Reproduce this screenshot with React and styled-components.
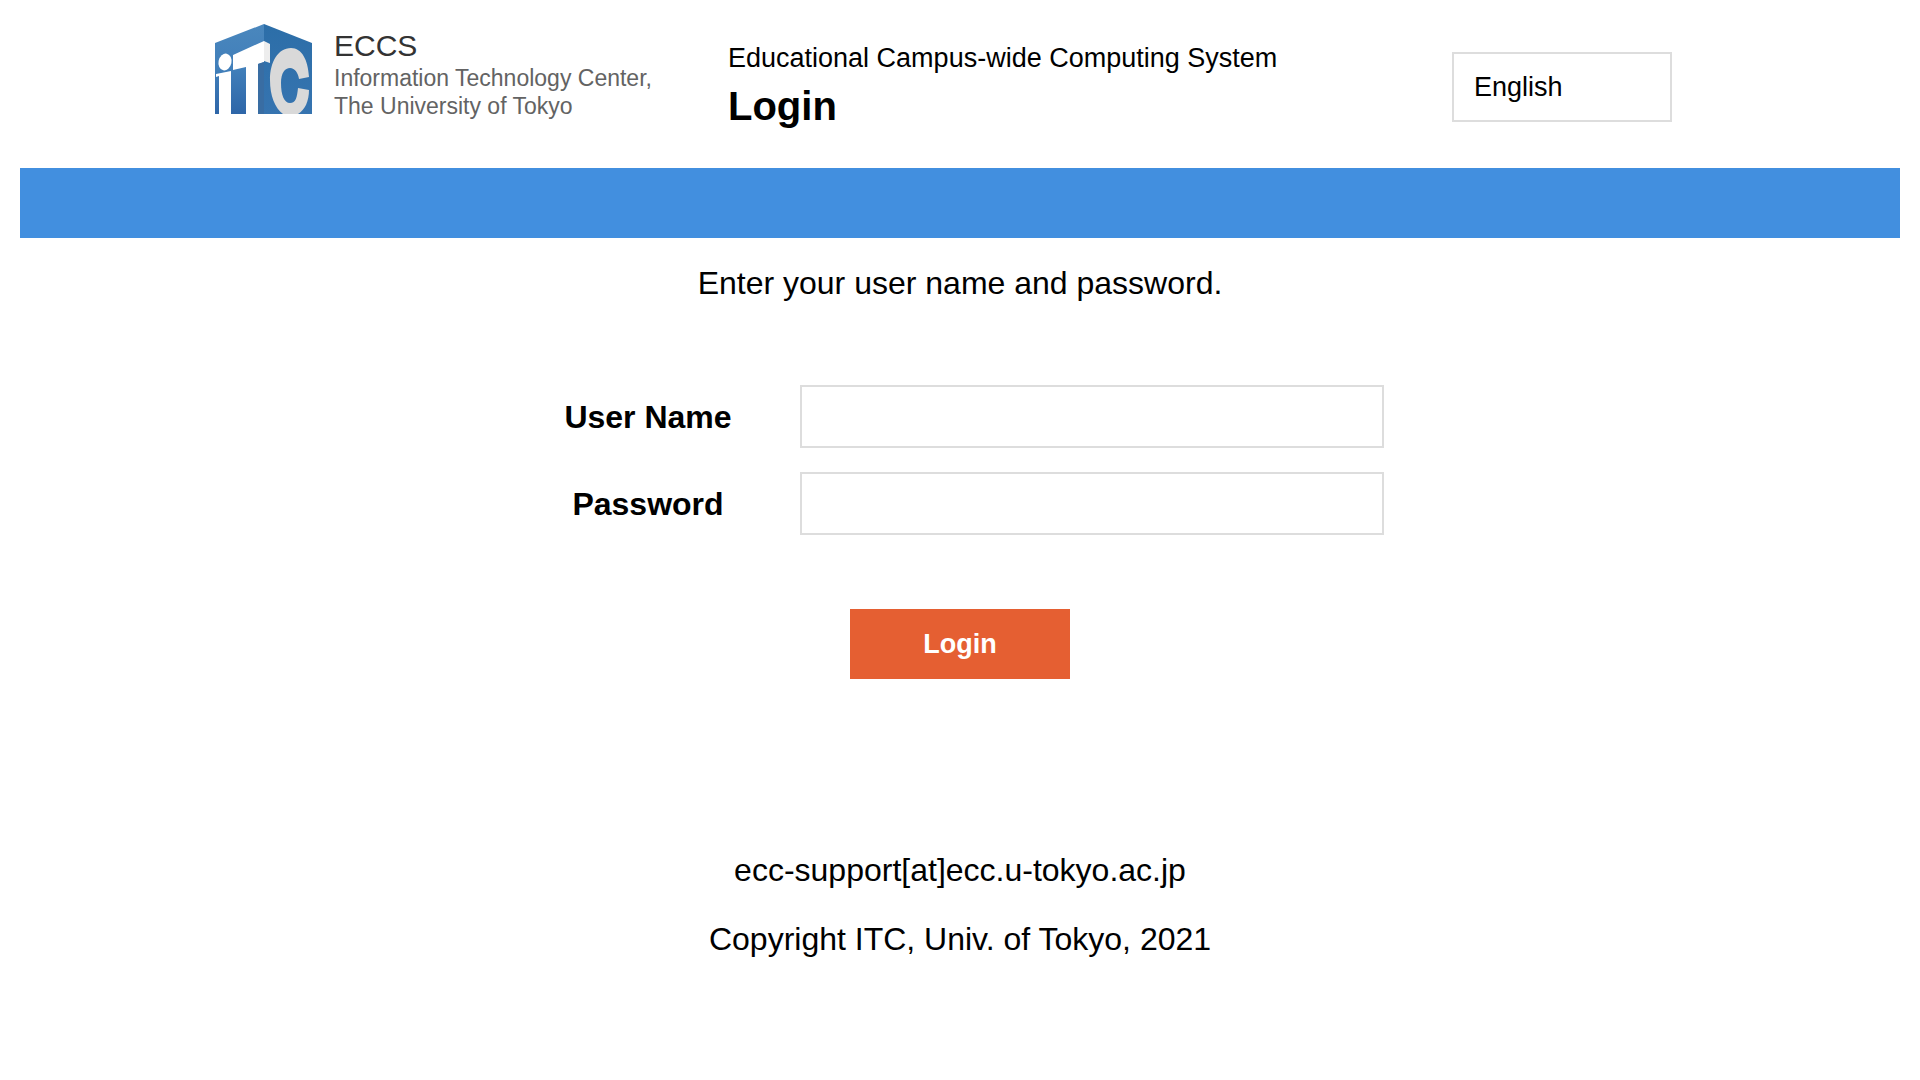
import React from "react";
import styled, { createGlobalStyle } from "styled-components";

const GlobalStyle = createGlobalStyle`
  * { box-sizing: border-box; }
  body {
    margin: 0;
    background: #fff;
    color: #000;
    font-family: "Liberation Sans", Arial, Helvetica, sans-serif;
    font-size: 32px;
    line-height: 40px;
  }
`;

const Page = styled.div`
  padding: 0 20px;
`;

const Header = styled.header`
  display: grid;
  grid-template-columns: 460px 1fr 220px;
  column-gap: 56px;
  align-items: start;
  max-width: 1496px;
  height: 168px;
  margin: 0 auto;
  padding-right: 36px;
`;

const Brand = styled.div`
  display: flex;
  gap: 20px;
  padding-top: 22px;
`;

const Cube = styled.svg`
  flex: none;
  width: 102px;
  height: 94px;
`;

const BrandText = styled.div`
  padding-top: 6px;
  color: #636363;
  font-size: 23px;
  line-height: 28px;
  white-space: nowrap;
`;

const BrandName = styled.div`
  color: #333;
  font-size: 30px;
  line-height: 36px;
`;

const Heading = styled.div`
  padding-top: 40px;
`;

const SystemName = styled.div`
  font-size: 27px;
  line-height: 36px;
`;

const Title = styled.h1`
  margin: 8px 0 0;
  font-size: 40px;
  line-height: 44px;
`;

const Language = styled.select`
  appearance: none;
  width: 220px;
  height: 70px;
  margin-top: 52px;
  padding: 0 20px;
  border: 2px solid #ddd;
  border-radius: 0;
  background: #fff;
  color: #000;
  font: 27px "Liberation Sans", Arial, sans-serif;
`;

const Band = styled.div`
  height: 70px;
  background: #428fdf;
`;

const Form = styled.form`
  display: flex;
  flex-direction: column;
  align-items: center;
`;

const Prompt = styled.p`
  margin: 25px 0 82px;
`;

const Fields = styled.div`
  display: grid;
  grid-template-columns: 224px 584px;
  gap: 24px 40px;
  align-items: center;
`;

const Label = styled.label`
  font-weight: 700;
  text-align: center;
`;

const Field = styled.input`
  width: 100%;
  height: 63px;
  padding: 0 16px;
  border: 2px solid #ddd;
  border-radius: 0;
  background: #fff;
  font: inherit;
`;

const Submit = styled.button`
  width: 220px;
  height: 70px;
  margin-top: 74px;
  border: 0;
  background: #e55f32;
  color: #fff;
  font: 700 27px "Liberation Sans", Arial, sans-serif;
`;

const Footer = styled.footer`
  padding-top: 171px;
  text-align: center;
`;

const FooterLine = styled.p`
  margin: 0 0 29px;
`;

function ItcLogo() {
  return (
    <Cube viewBox="0 0 102 94" role="img" aria-label="ITC">
      <defs>
        <linearGradient id="left" x1="0" y1="0" x2="0" y2="1">
          <stop offset="0" stopColor="#4a87bd" />
          <stop offset="0.5" stopColor="#417fba" />
          <stop offset="1" stopColor="#2e66a8" />
        </linearGradient>
        <linearGradient id="right" x1="0" y1="0" x2="0" y2="1">
          <stop offset="0" stopColor="#2c6ea8" />
          <stop offset="1" stopColor="#3674b0" />
        </linearGradient>
      </defs>
      <path d="M3 21 L52 2 V92 H3Z" fill="url(#left)" />
      <path d="M52 2 L100 21 V92 H52Z" fill="url(#right)" />
      <ellipse cx="13" cy="40" rx="6.5" ry="8.5" fill="#fff" transform="rotate(12 13 40)" />
      <path d="M4 52 L19 49 V92 H7 V54 L4 55Z" fill="#fff" />
      <path d="M21 33 L52 19 V40 L46 42 V92 H34 V45 L21 48Z" fill="#fff" />
      <path d="M52 19 L58 22 V41 L52 39Z" fill="#ededed" />
      <path d="M46 42 L52 40 V92 H46Z" fill="#396da3" />
      <path
        d="M97 55 C96 38 90 26 79 26 C66 26 58 40 58 58 C58 74 63 86 71 92 H86 C93 88 97 79 97 68 L86 66 C85 75 84 81 78 81 C72 81 69 73 69 61 C69 51 73 46 78 46 C83 46 86 51 87 57Z"
        fill="#d9d9d9"
      />
    </Cube>
  );
}

export default function App() {
  return (
    <Page>
      <GlobalStyle />
      <Header>
        <Brand>
          <ItcLogo />
          <BrandText>
            <BrandName>ECCS</BrandName>
            <div>Information Technology Center,</div>
            <div>The University of Tokyo</div>
          </BrandText>
        </Brand>
        <Heading>
          <SystemName>Educational Campus-wide Computing System</SystemName>
          <Title>Login</Title>
        </Heading>
        <Language aria-label="Language" defaultValue="en">
          <option value="en">English</option>
          <option value="ja">日本語</option>
        </Language>
      </Header>
      <Band />
      <Form onSubmit={(event) => event.preventDefault()}>
        <Prompt>Enter your user name and password.</Prompt>
        <Fields>
          <Label htmlFor="username">User Name</Label>
          <Field id="username" type="text" autoComplete="username" />
          <Label htmlFor="password">Password</Label>
          <Field id="password" type="password" autoComplete="current-password" />
        </Fields>
        <Submit type="submit">Login</Submit>
      </Form>
      <Footer>
        <FooterLine>ecc-support[at]ecc.u-tokyo.ac.jp</FooterLine>
        <FooterLine>Copyright ITC, Univ. of Tokyo, 2021</FooterLine>
      </Footer>
    </Page>
  );
}
